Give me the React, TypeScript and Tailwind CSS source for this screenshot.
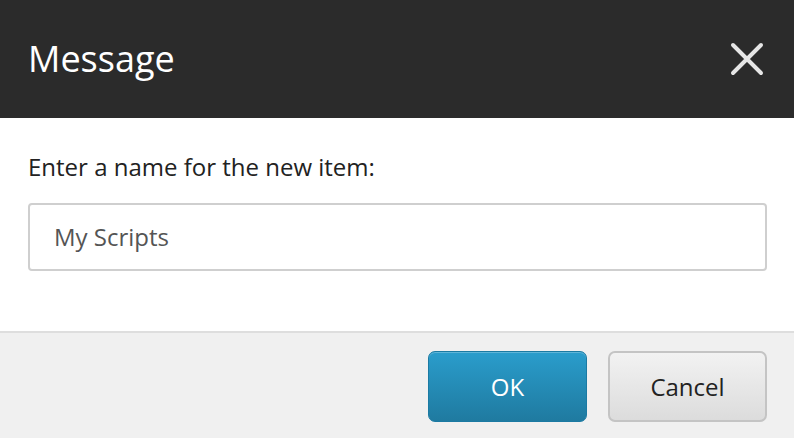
import React from "react";

export default function App() {
  return (
    <div
      className="w-[794px] h-[438px] flex flex-col bg-white overflow-hidden"
      style={{ fontFamily: '"Open Sans", "Liberation Sans", sans-serif' }}
    >
      <div className="h-[118px] shrink-0 bg-[#2b2b2b] flex items-center justify-between pl-[28px] pr-[30px]">
        <h1 className="text-[36px] text-white leading-none">Message</h1>
        <button className="w-[34px] h-[34px] flex items-center justify-center">
          <svg width="34" height="34" viewBox="0 0 34 34">
            <path d="M3 3 L31 31 M31 3 L3 31" stroke="#e6e6e6" strokeWidth="4" strokeLinecap="round" />
          </svg>
        </button>
      </div>
      <div className="flex-1 px-[28px] pt-[33px]">
        <p className="text-[24px] text-[#222] leading-[32px]">Enter a name for the new item:</p>
        <div className="mt-[20px] h-[68px] w-[739px] border-2 border-[#cfcfcf] rounded-[4px] flex items-center pl-[24px]">
          <span className="text-[24px] text-[#555] leading-none">My Scripts</span>
        </div>
      </div>
      <div className="h-[107px] shrink-0 bg-[#f0f0f0] border-t-2 border-[#dedede] flex items-center justify-end gap-[21px] pr-[27px] pt-[2px]">
        <button className="w-[159px] h-[71px] rounded-[7px] border border-[#1b7aa3] bg-gradient-to-b from-[#2a9dcc] to-[#1f7aa0] text-white text-[24px] shadow-[inset_0_1px_0_rgba(255,255,255,0.25)]">
          OK
        </button>
        <button className="w-[159px] h-[71px] rounded-[7px] border-2 border-[#c4c4c4] bg-gradient-to-b from-[#f2f2f2] to-[#dcdcdc] text-[#222] text-[24px]">
          Cancel
        </button>
      </div>
    </div>
  );
}
